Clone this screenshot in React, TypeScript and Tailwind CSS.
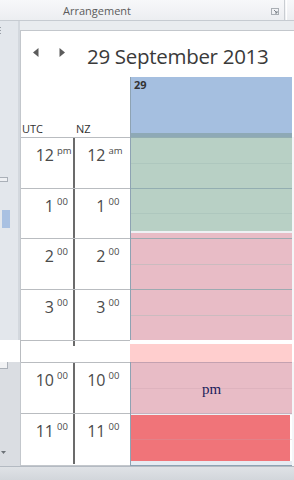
import React from 'react';

interface HourRow {
  utc: string;
  utcSup: string;
  nz: string;
  nzSup: string;
  h: string;
}

const upperRows: HourRow[] = [
  { utc: '12', utcSup: 'pm', nz: '12', nzSup: 'am', h: 'h-[51px]' },
  { utc: '1', utcSup: '00', nz: '1', nzSup: '00', h: 'h-[50px]' },
  { utc: '2', utcSup: '00', nz: '2', nzSup: '00', h: 'h-[51px]' },
  { utc: '3', utcSup: '00', nz: '3', nzSup: '00', h: 'h-[51px]' },
];

const lowerRows: HourRow[] = [
  { utc: '10', utcSup: '00', nz: '10', nzSup: '00', h: 'h-[51px]' },
  { utc: '11', utcSup: '00', nz: '11', nzSup: '00', h: 'h-[51px]' },
];

function TimeCell({ row }: { row: HourRow }) {
  return (
    <div className={`flex ${row.h} border-t border-[#b9bcc0]`}>
      {/* UTC */}
      <div className="flex w-[52px] pt-[7px]">
        <span className="w-[33px] text-right text-[16px] leading-[20px] text-[#4a4a4a]">{row.utc}</span>
        <span className="ml-[3px] text-[9.5px] leading-[12px] text-[#4a4a4a]">{row.utcSup}</span>
      </div>
      <div className="w-[1.5px] bg-[#6b6b6b]" />
      {/* NZ */}
      <div className="flex flex-1 pt-[7px]">
        <span className="w-[31px] text-right text-[16px] leading-[20px] text-[#4a4a4a]">{row.nz}</span>
        <span className="ml-[3px] text-[9.5px] leading-[12px] text-[#4a4a4a]">{row.nzSup}</span>
      </div>
    </div>
  );
}

function GridLines({ rows, hour, half }: { rows: number[]; hour: string; half: string }) {
  return (
    <div className="pointer-events-none absolute inset-0 flex flex-col">
      {rows.map((h, i) => (
        <div key={i} className={`flex flex-col border-t ${hour}`} style={{ height: h }}>
          <div className="flex-1" />
          <div className={`h-px ${half}`} />
          <div className="flex-1" />
        </div>
      ))}
    </div>
  );
}

export default function App() {
  return (
    <div className="flex h-[480px] w-[294px] flex-col overflow-hidden bg-[#e9ecef] font-['Open_Sans','Noto_Sans',sans-serif]">
      {/* Ribbon group label */}
      <div className="flex h-[21px] shrink-0 items-center border-b border-[#c6cbd1] bg-gradient-to-b from-[#f7f8fa] to-[#eceef1]">
        <span className="ml-[63px] text-[11px] leading-none text-[#5b5b5b]">Arrangement</span>
        <svg className="ml-auto mr-[5px] mt-[3px]" width="8" height="7" viewBox="0 0 8 7">
          <rect x="0.5" y="0.5" width="7" height="6" fill="none" stroke="#a9aeb4" />
          <path d="M3 2 L6 5 M6 3 V5 H4" stroke="#7d838a" fill="none" />
        </svg>
        <div className="mr-[7px] flex h-full gap-px">
          <div className="w-px bg-[#c9cdd2]" />
          <div className="w-px bg-white" />
        </div>
      </div>

      {/* Upper part */}
      <div className="flex h-[319px] shrink-0">
        <div className="relative w-[20px] shrink-0 bg-[#e3e7ec]">
          <div className="absolute left-0 top-[6px] flex flex-col gap-[2px]">
            <div className="h-px w-px bg-[#9aa0a8]" />
            <div className="h-px w-px bg-[#9aa0a8]" />
            <div className="h-px w-px bg-[#9aa0a8]" />
          </div>
          <div className="absolute left-0 top-[156px] h-[5px] w-[8px] border border-l-0 border-[#aab0b8] bg-[#eef0f3]" />
          <div className="absolute left-[2px] top-[189px] h-[18px] w-[8px] bg-[#a9c1e2]" />
          <div className="absolute right-0 top-0 h-full w-[2px] bg-[#d3d8de]" />
        </div>
        <div className="flex flex-1 flex-col pt-[9px]">
          <div className="flex flex-1 flex-col border-l border-t border-[#c3c7cc] bg-white">
            {/* date nav */}
            <div className="flex h-[46px] shrink-0 items-start pt-[13px]">
              <svg className="ml-[12px] mt-[4px]" width="6" height="9" viewBox="0 0 6 9">
                <path d="M5.5 0 L0 4.5 L5.5 9 Z" fill="#5c5c5c" />
              </svg>
              <svg className="ml-[20px] mt-[4px]" width="6" height="9" viewBox="0 0 6 9">
                <path d="M0.5 0 L6 4.5 L0.5 9 Z" fill="#5c5c5c" />
              </svg>
              <span className="ml-[22px] text-[20.5px] leading-[24px] tracking-[-0.3px] text-[#3a3a3a]">29 September 2013</span>
            </div>
            {/* column headers */}
            <div className="flex h-[60px] shrink-0">
              <div className="flex w-[109px] items-end pb-[1px] text-[11px] leading-[14px] text-[#333]">
                <span className="ml-[1px] w-[54px]">UTC</span>
                <span>NZ</span>
              </div>
              <div className="flex flex-1 flex-col border-l border-[#8ea3b3]">
                <div className="flex-1 bg-[#a5bfe0] pl-[3px] pt-[1px] text-[11px] font-bold leading-[14px] text-[#333]">29</div>
                <div className="h-[4px] bg-[#8ea9b6]" />
              </div>
              <div className="w-[2px]" />
            </div>
            {/* hour rows */}
            <div className="flex flex-1">
              <div className="flex w-[109px] flex-col">
                {upperRows.map((r) => (
                  <TimeCell key={r.utc} row={r} />
                ))}
              </div>
              <div className="relative flex flex-1 flex-col border-l border-[#8ea3b3]">
                <div className="h-[94px] bg-[#b8d0c5]" />
                <div className="h-[2px] bg-[#eef1f4]" />
                <div className="flex-1 bg-[#e8bcc6]" />
                <GridLines rows={[51, 50, 51, 51]} hour="border-[#8aa5ab]/80" half="bg-[#a0b9b4]/40" />
              </div>
              <div className="w-[2px] bg-[#f4f6f8]" />
            </div>
          </div>
        </div>
      </div>

      {/* Break band */}
      <div className="flex h-[22px] shrink-0 bg-white">
        <div className="w-[20px] shrink-0 bg-white" />
        <div className="flex w-[110px] border-l border-t border-[#b9bcc0]">
          <div className="h-[5px] w-[52px]" />
          <div className="h-[5px] w-[1.5px] bg-[#6b6b6b]" />
        </div>
        <div className="flex flex-1 flex-col pt-[4px]">
          <div className="flex-1 bg-[#ffcece]" />
        </div>
        <div className="w-[2px]" />
      </div>

      {/* Lower part */}
      <div className="flex h-[104px] shrink-0">
        <div className="relative w-[20px] shrink-0 bg-[#dadde2]">
          <div className="absolute left-0 top-0 h-[7px] w-[8px] border border-l-0 border-t-0 border-[#aab0b8] bg-[#f1f2f4]" />
          <svg className="absolute bottom-[12px] left-[1px]" width="5" height="3" viewBox="0 0 5 3">
            <path d="M0 0 H5 L2.5 3 Z" fill="#6d7278" />
          </svg>
        </div>
        <div className="flex flex-1 bg-white">
          <div className="flex w-[110px] flex-col border-b border-l border-[#c3c7cc]">
            {lowerRows.map((r) => (
              <TimeCell key={r.utc} row={r} />
            ))}
          </div>
          <div className="relative flex flex-1 flex-col border-b border-l border-[#8ea3b3]">
            <div className="h-[51px] bg-[#e8bcc6]" />
            <div className="h-[2px] bg-[#eef1f4]" />
            <div className="flex h-[46px] pr-[2px]">
              <div className="flex-1 bg-[#f07479]" />
            </div>
            <div className="flex-1 bg-[#e6ebf2]" />
            <GridLines rows={[51, 51]} hour="border-[#b595a6]/70" half="bg-[#c7a0ad]/30" />
            <div className="absolute left-0 right-0 top-[18px] text-center font-['Liberation_Serif',serif] text-[15px] leading-[18px] text-[#1c1c5c]">
              pm
            </div>
          </div>
          <div className="w-[2px] bg-[#f4f6f8]" />
        </div>
      </div>

      {/* bottom bar */}
      <div className="flex-1 border-t border-[#b4bac2] bg-gradient-to-b from-[#dfe2e6] to-[#d2d6db]" />
    </div>
  );
}
